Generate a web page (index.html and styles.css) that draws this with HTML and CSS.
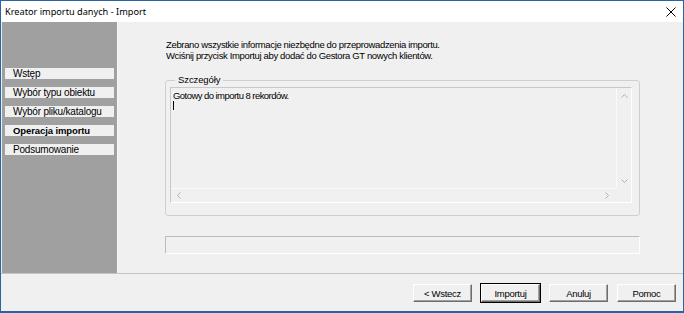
FILE: index.html
```html
<!DOCTYPE html>
<html lang="pl">
<head>
  <meta charset="UTF-8">
  <title>Kreator importu danych - Import</title>
  <link rel="stylesheet" href="styles.css">
</head>
<body>
<div class="window">
  <div class="titlebar">
    <span class="title">Kreator importu danych - Import</span>
    <svg class="close" width="10" height="10" viewBox="0 0 10 10">
      <path d="M0.5 0.5 L9.5 9.5 M9.5 0.5 L0.5 9.5" stroke="#000" stroke-width="1" fill="none"/>
    </svg>
  </div>
  <div class="content">
    <div class="sidebar">
      <div class="step">Wstęp</div>
      <div class="step">Wybór typu obiektu</div>
      <div class="step">Wybór pliku/katalogu</div>
      <div class="step active">Operacja importu</div>
      <div class="step">Podsumowanie</div>
    </div>
    <div class="main">
      <p class="intro">Zebrano wszystkie informacje niezbędne do przeprowadzenia importu.<br>
      Wciśnij przycisk Importuj aby dodać do Gestora GT nowych klientów.</p>
      <fieldset class="details">
        <legend>Szczegóły</legend>
        <div class="memo">
          <div class="memo_text">Gotowy do importu 8 rekordów.<br><span class="caret"></span></div>
          <div class="vscroll">
            <svg width="7" height="4" viewBox="0 0 7 4"><path d="M0.5 3.5 L3.5 0.5 L6.5 3.5" stroke="#b0b0b0" fill="none"/></svg>
            <svg width="7" height="4" viewBox="0 0 7 4"><path d="M0.5 0.5 L3.5 3.5 L6.5 0.5" stroke="#b0b0b0" fill="none"/></svg>
          </div>
          <div class="hscroll">
            <svg width="4" height="7" viewBox="0 0 4 7"><path d="M3.5 0.5 L0.5 3.5 L3.5 6.5" stroke="#b0b0b0" fill="none"/></svg>
            <svg width="4" height="7" viewBox="0 0 4 7"><path d="M0.5 0.5 L3.5 3.5 L0.5 6.5" stroke="#b0b0b0" fill="none"/></svg>
          </div>
        </div>
      </fieldset>
      <div class="progress"></div>
    </div>
  </div>
  <div class="footer">
    <button class="btn">&lt; Wstecz</button>
    <button class="btn default">Importuj</button>
    <button class="btn">Anuluj</button>
    <button class="btn">Pomoc</button>
  </div>
</div>
</body>
</html>
```

FILE: styles.css
```css
* {
    box-sizing: border-box;
}
body {
    margin: 0;
    background: #fff;
    font-family: "Liberation Sans", Arial, sans-serif;
    font-size: 10px;
    color: #000;
}
.window {
    width: 684px;
    height: 313px;
    border: 1px solid #2a63a8;
    border-bottom-width: 2px;
    background: #f0f0f0;
    display: flex;
    flex-direction: column;
}
.titlebar {
    height: 21px;
    background: #fff;
    display: flex;
    align-items: center;
    justify-content: space-between;
    padding: 0 7px 0 4px;
    flex-shrink: 0;
}
.title {
    font-family: "Noto Sans", sans-serif;
    font-size: 9.2px;
}
.close {
    display: block;
}

/* główna część okna */
.content {
    display: flex;
    height: 252px;
    border-bottom: 1px solid #c4c4c4;
    flex-shrink: 0;
}
.sidebar {
    width: 116px;
    margin-left: 1px;
    background: #a0a0a0;
    border-right: 1px solid #f8f8f8;
    padding: 46px 3px 0 3px;
    display: flex;
    flex-direction: column;
    gap: 8px;
}
.step {
    height: 11px;
    line-height: 11px;
    background: #f0f0f0;
    padding-left: 8px;
    font-size: 10px;
    letter-spacing: -0.2px;
    white-space: nowrap;
    overflow: hidden;
}
.step.active {
    font-weight: bold;
    font-size: 9.5px;
    letter-spacing: -0.1px;
}
.main {
    flex: 1;
    padding: 17px 43px 0 47px;
}
.intro {
    margin: 0 0 0 1px;
    line-height: 11px;
    font-size: 9.5px;
    letter-spacing: -0.35px;
    white-space: nowrap;
}
.details {
    margin: 14px 0 0 0;
    padding: 5px 7px 10px 4px;
    border: 1px solid #cfcfcf;
    border-radius: 3px;
    height: 141px;
}
.details legend {
    padding: 0 3px;
    margin-left: 5px;
    font-size: 9.5px;
    letter-spacing: -0.1px;
    line-height: 10px;
}
.memo {
    position: relative;
    height: 116px;
    margin-top: -3px;
    border: 1px solid #c8c8c8;
    border-right-color: #fff;
    border-bottom-color: #fff;
    background: #f0f0f0;
}
.memo_text {
    padding: 3px 0 0 2px;
    font-size: 9.5px;
    letter-spacing: -0.55px;
    line-height: 10px;
}
.caret {
    display: inline-block;
    width: 1px;
    height: 9px;
    background: #000;
}
.vscroll {
    position: absolute;
    top: 0;
    right: 0;
    width: 15px;
    bottom: 14px;
    border-left: 1px solid #fafafa;
    display: flex;
    flex-direction: column;
    justify-content: space-between;
    align-items: center;
    padding: 6px 0 5px 0;
}
.hscroll {
    position: absolute;
    left: 0;
    right: 15px;
    bottom: 0;
    height: 14px;
    border-top: 1px solid #fafafa;
    display: flex;
    justify-content: space-between;
    align-items: center;
    padding: 0 7px 0 6px;
}
.vscroll svg, .hscroll svg {
    display: block;
}
.progress {
    margin-top: 20px;
    height: 18px;
    border: 1px solid #bcbcbc;
    border-right-color: #fff;
    border-bottom-color: #fff;
}

/* przyciski */
.footer {
    flex: 1;
    display: flex;
    justify-content: flex-end;
    gap: 9px;
    padding: 10px 7px 0 0;
}
.btn {
    width: 59px;
    height: 18px;
    padding: 0;
    background: #f0f0f0;
    border: 1px solid;
    border-color: #fff #6e6e6e #6e6e6e #fff;
    box-shadow: inset -1px -1px 0 #a0a0a0;
    font-family: "Liberation Sans", Arial, sans-serif;
    font-size: 9.5px;
    letter-spacing: -0.3px;
    color: #000;
}
.btn.default {
    outline: 1px solid #000;
    outline-offset: 0;
}
```
